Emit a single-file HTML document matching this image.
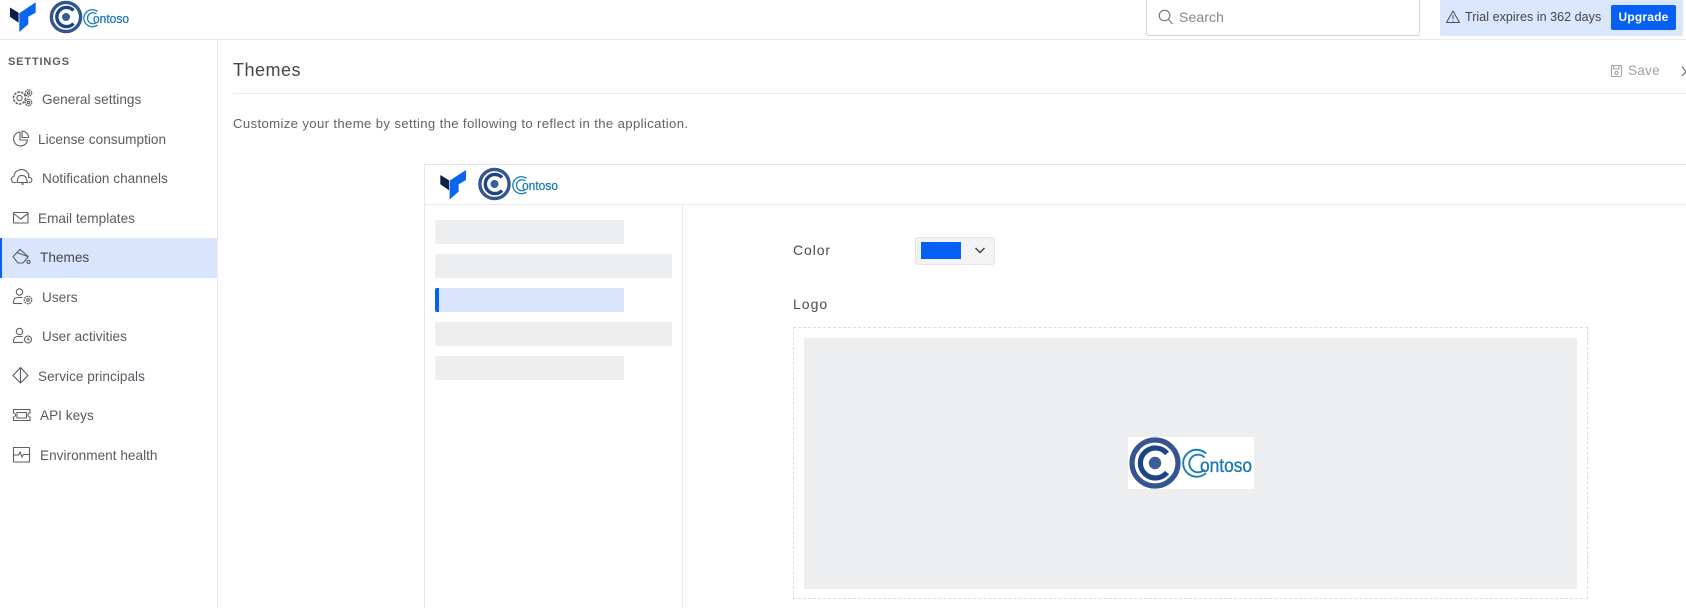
<!DOCTYPE html>
<html lang="en"><head><meta charset="utf-8"><title>Themes</title>
<style>
html,body{margin:0;padding:0;background:#fff}
body{width:1686px;height:608px;position:relative;overflow:hidden;font-family:"Liberation Sans",sans-serif;color:#565660}
.a{position:absolute}
.t{position:absolute;white-space:nowrap;line-height:20px;height:20px}
.n{font-size:13.6px;letter-spacing:.02px;color:#5a5a64}
.sk{position:absolute;background:#edeef0;border-radius:2px;height:24px;left:435px}
svg{position:absolute;left:0;top:0;overflow:visible}
</style></head><body>

<div class="a" style="left:0;top:39px;width:1686px;height:1px;background:#e9e9ec"></div>
<div class="a" style="left:217px;top:40px;width:1px;height:568px;background:#e9e9ec"></div>
<div class="a" style="left:233px;top:93px;width:1453px;height:1px;background:#ececee"></div>

<div class="a" style="left:1146px;top:-3px;width:272px;height:37px;border:1px solid #d3d0ea;border-radius:3px;box-sizing:content-box"></div>
<div class="t" style="left:1179px;top:7px;font-size:14px;letter-spacing:.1px;color:#85858c">Search</div>

<div class="a" style="left:1440px;top:0;width:243px;height:36px;background:#d9e6fc;border-radius:0 0 2px 2px"></div>
<div class="t" style="left:1465px;top:7px;font-size:12.5px;letter-spacing:.05px;color:#45454e">Trial expires in 362 days</div>
<div class="a" style="left:1611px;top:5px;width:65px;height:25px;background:#0760f5;border-radius:2px;color:#fff;font-size:12px;font-weight:bold;line-height:25px;text-align:center;letter-spacing:.2px">Upgrade</div>

<div class="t" style="left:8px;top:52px;font-size:11px;font-weight:bold;letter-spacing:.85px;color:#5c5c64">SETTINGS</div>
<div class="a" style="left:0;top:238px;width:217px;height:40px;background:#d8e5fc"></div>
<div class="a" style="left:0;top:238px;width:1.5px;height:40px;background:#0760f5"></div>

<div class="t n" style="left:42px;top:90px">General settings</div>
<div class="t n" style="left:38px;top:130px">License consumption</div>
<div class="t n" style="left:42px;top:169px">Notification channels</div>
<div class="t n" style="left:38px;top:209px">Email templates</div>
<div class="t n" style="left:40px;top:248px;color:#45454f">Themes</div>
<div class="t n" style="left:42px;top:288px">Users</div>
<div class="t n" style="left:42px;top:327px">User activities</div>
<div class="t n" style="left:38px;top:367px">Service principals</div>
<div class="t n" style="left:40px;top:406px">API keys</div>
<div class="t n" style="left:40px;top:446px">Environment health</div>

<div class="t" style="left:233px;top:59px;font-size:18px;letter-spacing:.5px;line-height:22px;height:22px;color:#45454c">Themes</div>
<div class="t" style="left:233px;top:114px;font-size:13.2px;letter-spacing:.34px;color:#62626a">Customize your theme by setting the following to reflect in the application.</div>
<div class="t" style="left:1628px;top:61px;font-size:13.5px;letter-spacing:.3px;color:#a0a0a5">Save</div>

<div class="a" style="left:424px;top:164px;width:1262px;height:444px;border:1px solid #e6e6e9;border-right:0;border-bottom:0;box-sizing:border-box"></div>
<div class="a" style="left:425px;top:204px;width:1261px;height:1px;background:#e9e9ec"></div>
<div class="a" style="left:682px;top:205px;width:1px;height:403px;background:#e9e9ec"></div>
<div class="sk" style="top:220px;width:189px"></div>
<div class="sk" style="top:254px;width:237px"></div>
<div class="sk" style="top:288px;width:189px;background:#d8e5fc"></div>
<div class="a" style="left:435px;top:288px;width:4px;height:24px;background:#0760f5;border-radius:2px 0 0 2px"></div>
<div class="sk" style="top:322px;width:237px"></div>
<div class="sk" style="top:356px;width:189px"></div>

<div class="t" style="left:793px;top:240px;font-size:14px;letter-spacing:.9px;color:#4a4a52">Color</div>
<div class="a" style="left:915px;top:237px;width:80px;height:28px;box-sizing:border-box;background:#f3f3f4;border:1px solid #e4e4e6;border-radius:3px"></div>
<div class="a" style="left:921px;top:242px;width:40px;height:17px;background:#0760f5"></div>
<div class="t" style="left:793px;top:294px;font-size:14px;letter-spacing:1px;color:#4a4a52">Logo</div>
<div class="a" style="left:793px;top:327px;width:795px;height:272px;box-sizing:border-box;border:1px dashed #dedee0"></div>
<div class="a" style="left:804px;top:338px;width:773px;height:251px;background:#edeef0"></div>
<div class="a" style="left:1128px;top:437px;width:126px;height:52px;background:#fff"></div>

<svg width="1686" height="608" viewBox="0 0 1686 608" fill="none">
<!-- top logos -->
<path d="M35.7 2.3V12.6L28.3 16.8V24.2L19.3 32V13.2Z" fill="#0a66f0"/><path d="M10 7.5L18.6 12.8V22.7L10 16.8Z" fill="#0b1f45"/>
<circle cx="66" cy="17" r="14.600" stroke="#34558f" stroke-width="3.400"/>
<path d="M73.500 10.500A9.600 9.600 0 1 0 73.500 23.500" stroke="#1e4488" stroke-width="3.400"/>
<circle cx="66" cy="17" r="4" fill="#3a5c98"/>
<path d="M97.500 11.500A8.500 8.500 0 1 0 97.500 25" stroke="#1a7fb8" stroke-width="1.300"/>
<path d="M96.500 14A5.500 5.500 0 1 0 96.500 22.500" stroke="#1a7fb8" stroke-width="1.300"/>
<text x="93" y="23" font-family="Liberation Sans" font-size="12.500" fill="#1c78b4" stroke="#1c78b4" stroke-width=".25" textLength="36" lengthAdjust="spacingAndGlyphs">ontoso</text>

<!-- preview logos -->
<path d="M466 170V180L458.600 184.400V191.600L449.600 199.500V180.600Z" fill="#0a66f0"/><path d="M440.300 175L449 180.300V190.200L440.300 184.300Z" fill="#0b1f45"/>
<circle cx="494.500" cy="184" r="14.600" stroke="#34558f" stroke-width="3.400"/>
<path d="M502 177.500A9.600 9.600 0 1 0 502 190.500" stroke="#1e4488" stroke-width="3.400"/>
<circle cx="494.500" cy="184" r="4" fill="#3a5c98"/>
<path d="M526.500 178.500A8.500 8.500 0 1 0 526.500 192" stroke="#1a7fb8" stroke-width="1.300"/>
<path d="M525.500 181A5.500 5.500 0 1 0 525.500 189.500" stroke="#1a7fb8" stroke-width="1.300"/>
<text x="522" y="190" font-family="Liberation Sans" font-size="12.500" fill="#1c78b4" stroke="#1c78b4" stroke-width=".25" textLength="36" lengthAdjust="spacingAndGlyphs">ontoso</text>

<!-- big logo -->
<circle cx="1155" cy="463" r="23" stroke="#34558f" stroke-width="5.200"/>
<path d="M1167 453.500A15 15 0 1 0 1167 472.500" stroke="#1e4488" stroke-width="5.200"/>
<circle cx="1155" cy="463" r="6.200" fill="#3a5c98"/>
<path d="M1206 453.500A13.500 13.500 0 1 0 1206 473" stroke="#1a7fb8" stroke-width="1.900"/>
<path d="M1204.500 457.500A8.800 8.800 0 1 0 1204.500 469.500" stroke="#1a7fb8" stroke-width="1.900"/>
<text x="1200" y="472" font-family="Liberation Sans" font-size="19" fill="#1c78b4" stroke="#1c78b4" stroke-width=".35" textLength="52" lengthAdjust="spacingAndGlyphs">ontoso</text>

<!-- header icons -->
<g stroke="#77777e" stroke-width="1.200"><circle cx="1164.500" cy="15.500" r="5.300"/><path d="M1168.500 19.500L1172.500 24"/></g>
<g stroke="#4a4a52" stroke-width="1"><path d="M1453 11L1459.500 22.500H1446.500Z" stroke-linejoin="round"/><path d="M1453 15V19M1453 20.200V21.200"/></g>
<g stroke="#a4a4a8" stroke-width="1.100"><rect x="1611.500" y="65.500" width="10" height="11" rx="1"/><path d="M1613.500 65.500V69H1619V65.500"/><circle cx="1616.500" cy="73" r="1.600"/></g>
<path d="M1682 66.500L1686 71.500L1682 76" stroke="#77777e" stroke-width="1.300"/>
<path d="M975.500 248L980 252.500L984.500 248" stroke="#3c3c44" stroke-width="1.400"/>

<!-- sidebar icons -->
<g stroke="#5e5e66" stroke-width="1.100" stroke-linejoin="round">
<circle cx="19.500" cy="98" r="2.600"/><circle cx="19.500" cy="98" r="6" stroke-dasharray="2.600 1.100" stroke-width="1.500"/>
<circle cx="28.500" cy="93" r="1.200"/><circle cx="28.500" cy="93" r="3.200" stroke-dasharray="1.500 .7" stroke-width="1.300"/>
<circle cx="28.500" cy="102.500" r="1.200"/><circle cx="28.500" cy="102.500" r="3.200" stroke-dasharray="1.500 .7" stroke-width="1.300"/>

<path d="M20 132A7 7 0 1 0 27.500 140H20Z"/><path d="M22 131V137.500H28.500A6.500 6.500 0 0 0 22 131Z"/>

<path d="M16 182.500H14.500A3 3 0 0 1 14 176.500A6.500 6.500 0 0 1 19 170A7 7 0 0 1 27 172A5 5 0 0 1 28.500 177.500A2.600 2.600 0 0 1 30 182.500H29"/><path d="M18 178A4.500 4.500 0 0 1 26.500 179.500L27.500 182.500H17Z"/><path d="M21 184H24"/>

<rect x="13.500" y="212.500" width="14.500" height="10.500" rx=".8"/><path d="M13.500 213.500L20.700 219L28 213.500"/>

<path d="M13 256.700L20 249.300L28.300 256.700L23 263H18Z"/><path d="M17 252.500L28.300 256.700"/><circle cx="28.500" cy="262" r="1.600"/>

<circle cx="19.500" cy="292" r="3.200"/><path d="M13.500 303.500V301.500A4 4 0 0 1 17.500 297.500H22.500"/><path d="M13.500 303.500H22"/><circle cx="28" cy="300" r="1.300"/><circle cx="28" cy="300" r="3.700" stroke-dasharray="1.800 .800" stroke-width="1.400"/>

<circle cx="19.500" cy="331.500" r="3.200"/><path d="M13.500 342.500V340.500A4 4 0 0 1 17.500 336.500H22.500"/><path d="M13.500 342.500H23"/><circle cx="28" cy="339.500" r="3.500"/><path d="M28 337.500V339.800H29.800"/>

<path d="M20.500 367.500L28 375.500L20.500 383L13 375.500Z"/><path d="M20.500 367.500V383" stroke="#6c4a86"/>

<path d="M13.500 409.500H30V413A2 2 0 0 0 30 417V420.500H13.500V417A2 2 0 0 0 13.500 413Z"/><rect x="17" y="412.500" width="9.500" height="5.500"/>

<rect x="13.500" y="447.500" width="16" height="14.500"/><path d="M13.500 455H18.500L20 452L22 457L23.500 454.500H29.500"/>
</g>
</svg>
</body></html>
